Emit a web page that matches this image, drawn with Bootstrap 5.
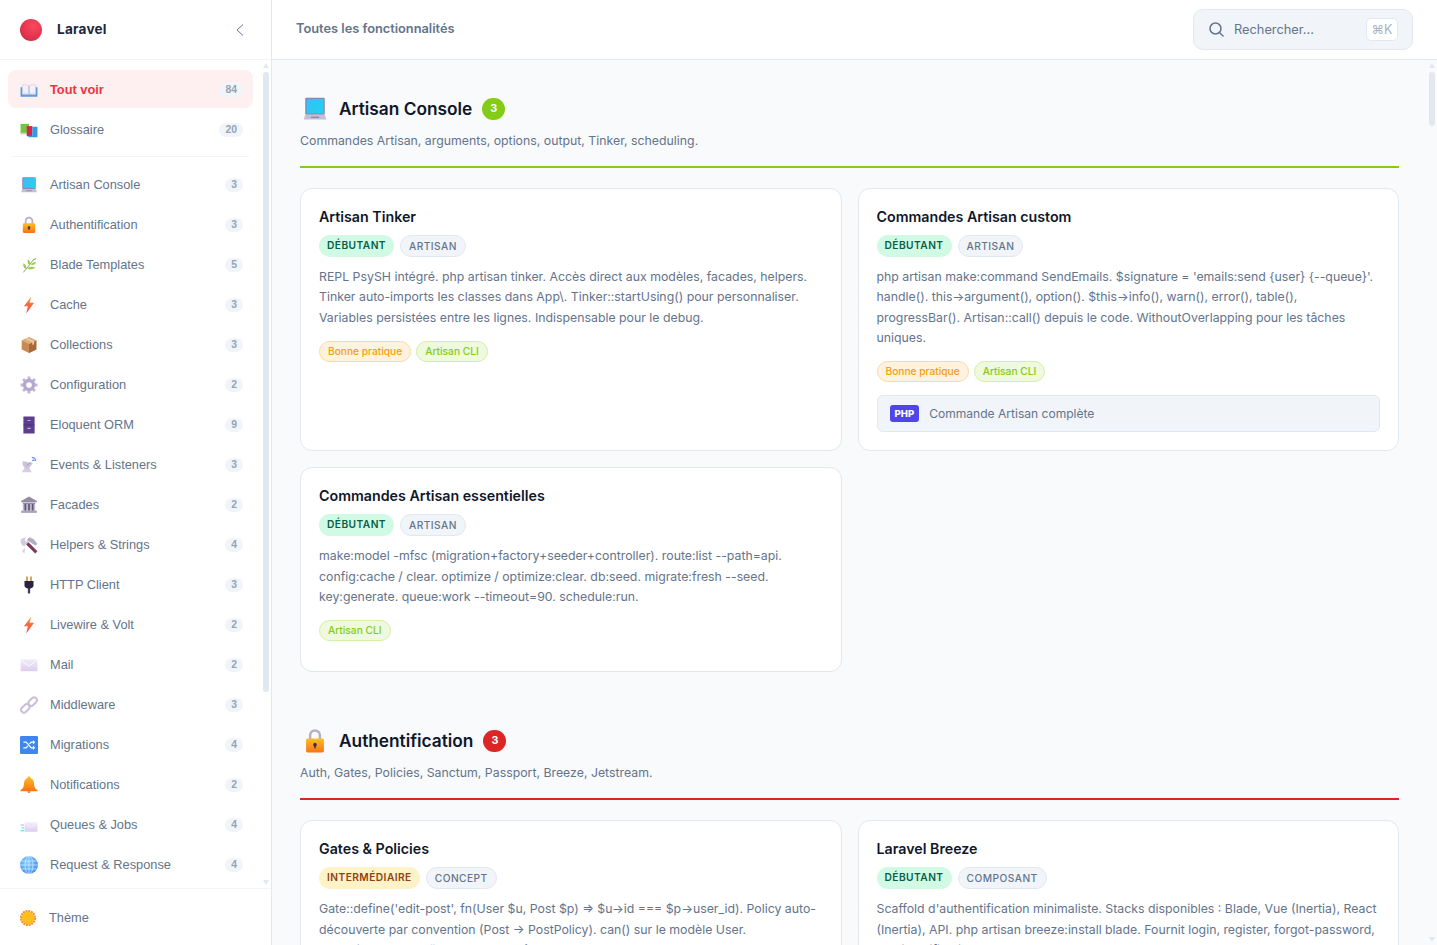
<!DOCTYPE html>
<html lang="fr">
<head>
  <meta charset="UTF-8">
  <title>Laravel - Toutes les fonctionnalités</title>
  <link rel="stylesheet" href="https://cdn.jsdelivr.net/npm/bootstrap@5.3.0/dist/css/bootstrap.min.css">
  <style>
  html, body { height: 100%; }
  body {
    font-family: "Inter", "Liberation Sans", sans-serif;
    background: #f8fafc;
    color: #0f172a;
    overflow: hidden;
  }
  /* scrollbars are part of the picture */
  .bar-col { width: 11px; flex-shrink: 0; padding: 3px 0; }
  .bar-up { width: 0; height: 0; border: 3px solid transparent; border-top: 0; border-bottom: 5px solid #e2e8f0; }
  .bar-down { width: 0; height: 0; border: 3px solid transparent; border-bottom: 0; border-top: 5px solid #e2e8f0; margin-top: auto; }
  .bar-thumb { width: 6px; background: #e2e8f0; border-radius: 3px; margin-top: 4px; }
  .thumb-side { height: 620px; }
  .thumb-main { height: 54px; }

  .side-panel { width: 272px; background: #fff; border-right: 1px solid #e2e8f0; }
  .side-brand { height: 60px; padding: 0 24px 0 20px; border-bottom: 1px solid #f1f5f9; }
  .brand-ball { width: 22px; height: 22px; border-radius: 50%; background: radial-gradient(circle at 62% 32%, #f8495e, #e5344c 55%, #b02a42); }
  .brand-name { font-size: 13.6px; font-weight: 700; color: #1e293b; margin-left: 15px; letter-spacing: .2px; }
  .side-nav { padding: 10px 7px 10px 8px; overflow: hidden; min-height: 0; }
  .side-item { height: 38px; margin-bottom: 2px; padding: 2px 10px 0 12px; border-radius: 8px; font-family: "Liberation Sans", Arial, sans-serif; font-size: 12.8px; color: #64748b; }
  .side-item svg { width: 18px; height: 18px; margin-right: 12px; flex-shrink: 0; }
  .side-item.is-on { background: #fef0f0; color: #ef3340; font-weight: 600; }
  .side-count { font-size: 10.4px; font-weight: 600; line-height: 14px; padding: 0 6px; margin-top: -1px; color: #94a3b8; background: #f1f5f9; border-radius: 10px; }
  .side-rule { height: 1px; background: #f1f5f9; margin: 8px 4px; }
  .side-foot { height: 57px; padding: 1px 21px 0; border-top: 1px solid #f1f5f9; font-family: "Liberation Sans", Arial, sans-serif; font-size: 12.8px; color: #64748b; }
  .side-foot svg { width: 16px; height: 16px; margin-right: 13px; margin-left: -1px; }

  .top-bar { height: 60px; padding: 0 24px; background: #fff; border-bottom: 1px solid #e2e8f0; }
  .top-title { font-size: 12.8px; font-weight: 600; color: #64748b; margin-top: -2px; }
  .search-box { width: 220px; height: 41px; padding: 0 14px; background: #f1f5f9; border: 1px solid #e2e8f0; border-radius: 10px; font-size: 12.8px; color: #64748b; }
  .search-box svg { width: 17px; height: 17px; margin-right: 9px; flex-shrink: 0; }
  .search-key { width: 32px; height: 23px; background: #fff; border: 1px solid #e2e8f0; border-radius: 5px; font-size: 12.5px; color: #a8b3c4; line-height: 21px; text-align: center; }

  .main-scroll { overflow: hidden; padding: 28px 27px 28px 28px; min-width: 0; }
  .feat-section { margin-bottom: 48px; }
  .sec-head { height: 42px; padding-left: 2px; }
  .sec-head svg { width: 26px; height: 26px; margin-right: 11px; }
  .sec-title { font-size: 17.28px; font-weight: 600; color: #0f172a; margin: 0 10px 0 0; }
  .sec-count { min-width: 23px; height: 22px; padding: 0 7px; border-radius: 11px; color: #fff; font-size: 10.8px; font-weight: 700; }
  .sec-desc { font-size: 12.32px; color: #64748b; line-height: 20px; margin: 1px 0 20px; padding-bottom: 15px; border-bottom: 2px solid; }
  .feat-grid { display: grid; grid-template-columns: 1fr 1fr; gap: 16px; }
  .feat-card { background: #fff; border: 1px solid #e2e8f0; border-radius: 12px; padding: 18px; }
  .feat-name { font-size: 14.24px; font-weight: 600; color: #0f172a; line-height: 20px; margin: 0 0 8px; }
  .lvl-row { gap: 6px; }
  .lvl-tag { font-size: 10.2px; font-weight: 600; letter-spacing: .45px; line-height: 14px; padding: 3px 8px 5px; border-radius: 11px; text-transform: uppercase; }
  .lvl-easy { background: #d1fae5; color: #065f46; }
  .lvl-mid { background: #fef3c7; color: #92400e; }
  .lvl-kind { background: #f1f5f9; color: #64748b; border: 1px solid #e2e8f0; padding: 3px 8px; font-weight: 500; }
  .feat-text { font-size: 12.32px; line-height: 20.33px; color: #64748b; margin: 10px 0 0; }
  .note-row { gap: 5px; margin: 13px 0 12px; }
  .note-tag { font-size: 10.2px; line-height: 13px; font-weight: 500; padding: 3px 8px 3px; border-radius: 11px; border: 1px solid; }
  .note-good { background: #fff3e0; color: #f59e0b; border-color: #fed7aa; }
  .note-cli { background: #eef9dd; color: #84cc16; border-color: #d4efa8; }
  .code-row { height: 37px; margin-top: 13px; padding: 0 12px; background: #f1f5f9; border: 1px solid #e2e8f0; border-radius: 6px; font-size: 12.05px; color: #64748b; }
  .php-chip { background: #4f46e5; color: #fff; font-size: 9.6px; font-weight: 800; line-height: 17px; padding: 0 5px; border-radius: 3px; margin-right: 10px; }
  .bg-lime { background: #84cc16; }
  .rule-lime { border-color: #84cc16; }
  .bg-crimson { background: #dc2626; }
  .rule-crimson { border-color: #dc2626; }
  </style>
</head>
<body>
  <svg width="0" height="0" class="position-absolute">
    <defs>
      <linearGradient id="gScreen" x1="0" y1="0" x2="1" y2="1"><stop offset="0" stop-color="#38bdf8"/><stop offset="1" stop-color="#22d3ee"/></linearGradient>
      <linearGradient id="gOrange" x1="0" y1="0" x2="0" y2="1"><stop offset="0" stop-color="#fbbf24"/><stop offset="1" stop-color="#f97316"/></linearGradient>
      <linearGradient id="gBolt" x1="0" y1="0" x2="0" y2="1"><stop offset="0" stop-color="#fb923c"/><stop offset="1" stop-color="#ef4444"/></linearGradient>
      <linearGradient id="gMail" x1="0" y1="0" x2="0" y2="1"><stop offset="0" stop-color="#f1ecf8"/><stop offset="1" stop-color="#dccdf0"/></linearGradient>
      <radialGradient id="gGlobe" cx=".4" cy=".35" r=".8"><stop offset="0" stop-color="#7dd3fc"/><stop offset="1" stop-color="#3b82f6"/></radialGradient>
      <symbol id="ic-book" viewBox="0 0 32 32"><path d="M4 7c4-1 9 0 12 2v15c-3-2-8-3-12-2zM28 7c-4-1-9 0-12 2v15c3-2 8-3 12-2z" fill="#f3f0fa" stroke="#cfc6e2"/><path d="M1 11h3v13h24V11h3v17H1z" fill="#5b9bd9"/><path d="M15.500 8h1v20h-1z" fill="#8fb4e0"/></symbol>
      <symbol id="ic-books" viewBox="0 0 32 32"><path d="M1 5h15v18H1z" fill="#76c442"/><path d="M1 21h15v3H1z" fill="#c9d8c0"/><path d="M12 9h10v18H12z" fill="#d1264f"/><path d="M22 10h9v19H15v-3h7z" fill="#2f9be8"/></symbol>
      <symbol id="ic-laptop" viewBox="0 0 32 32"><rect x="4" y="2" width="24" height="21" rx="1.500" fill="#8a83a8"/><rect x="5.500" y="3.500" width="21" height="18" fill="url(#gScreen)"/><path d="M4 23h24l2 6H2z" fill="#c4bed6"/><path d="M11 25.500h10V27H11z" fill="#8a83a8"/></symbol>
      <symbol id="ic-lock" viewBox="0 0 32 32"><path d="M10 15V9a6 6 0 0 1 12 0v6" fill="none" stroke="#b5aec6" stroke-width="3"/><rect x="5" y="13" width="22" height="17" rx="2" fill="url(#gOrange)"/><circle cx="16" cy="20.500" r="2.200" fill="#3a2f4e"/><path d="M15 21h2v4h-2z" fill="#3a2f4e"/></symbol>
      <symbol id="ic-herb" viewBox="0 0 32 32"><path d="M6 29C12 22 18 15 25 5" fill="none" stroke="#6a9a32" stroke-width="1.500"/><path d="M11 23C7 22 5 18 6 13c4 2 6 6 5 10zM17 16c-3-2-4-5-3-10 4 2 5 6 3 10zM13 22c3-3 8-4 14-2-3 4-9 5-14 2zM19 15c2-3 6-4 10-4-2 4-6 6-10 4zM24 7c1-2 3-3 5-4 0 3-2 5-5 4z" fill="#98cc4c"/></symbol>
      <symbol id="ic-bolt" viewBox="0 0 32 32"><path d="M20 1 7 18h7l-3 13 14-19h-8z" fill="url(#gBolt)"/></symbol>
      <symbol id="ic-box" viewBox="0 0 32 32"><path d="M16 2 29 8v16l-13 6L3 24V8z" fill="#c98a54"/><path d="M16 14v16l13-6V8z" fill="#a8693a"/><path d="M16 2 29 8l-13 6L3 8z" fill="#e0ad7a"/><path d="m9 5 13 6v5l3-1.500v-5L12 3.500z" fill="#f0d0a8"/></symbol>
      <symbol id="ic-gear" viewBox="0 0 32 32"><path d="M16 1v6M16 25v6M1 16h6M25 16h6M5.400 5.400l4 4M22.600 22.600l4 4M5.400 26.600l4-4M22.600 9.400l4-4" stroke="#c0b6d8" stroke-width="5"/><circle cx="16" cy="16" r="8" fill="#fff" stroke="#b3a8ce" stroke-width="6"/></symbol>
      <symbol id="ic-cabinet" viewBox="0 0 32 32"><rect x="6" y="1" width="20" height="30" rx="1" fill="#5b3f8e"/><path d="M6 15.500h20v1H6z" fill="#3d2a66"/><path d="M13 7h6v2h-6zM13 21h6v2h-6z" fill="#b5a6d8"/></symbol>
      <symbol id="ic-dish" viewBox="0 0 32 32"><path d="M3 29h18l-5-9H9z" fill="#d6d0e2"/><path d="M5 9c-2 6 2 14 9 15l9-11z" fill="#cbc4da"/><path d="M12 17l8-6" stroke="#9a93ae" stroke-width="1.500"/><path d="M22 9c1-2 2-2 4-1M21 3c4-1 7 2 7 6" fill="none" stroke="#5b8ce8" stroke-width="2"/></symbol>
      <symbol id="ic-bank" viewBox="0 0 32 32"><path d="M16 1 30 9v2H2V9z" fill="#948ca6"/><path d="M5 12h22v2H5z" fill="#7b7390"/><path d="M5 14h22v12H5z" fill="#bdb6cc"/><path d="M8 14h3v12H8zM14.500 14h3v12h-3zM21 14h3v12h-3z" fill="#5f5773"/><path d="M2 26h28v4H2z" fill="#a9a2ba"/></symbol>
      <symbol id="ic-tools" viewBox="0 0 32 32"><path d="M1 8c2-5 7-6 10-5l-3 4 3 3 4-3c1 3-1 8-6 8L8 31l-4-4 6-9C5 19 1 14 1 8z" fill="#d2ccde"/><path d="M12 7l5-5 8 4 6 8-4 3-6-4z" fill="#b3acc4"/><path d="M15 11 31 27l-4 4L11 15z" fill="#7a3c5c"/></symbol>
      <symbol id="ic-plug" viewBox="0 0 32 32"><path d="M11 1h3v9h-3zM18 1h3v9h-3z" fill="#c89a3e"/><path d="M8 9h16v8c0 3-3 5-5 5h-6c-2 0-5-2-5-5z" fill="#2b2140"/><path d="M14 21h4v10h-4z" fill="#3f3454"/></symbol>
      <symbol id="ic-mail" viewBox="0 0 32 32"><rect x="1" y="6" width="30" height="21" fill="url(#gMail)"/><path d="m1 7 15 11L31 7" fill="none" stroke="#fff" stroke-width="1.500"/></symbol>
      <symbol id="ic-link" viewBox="0 0 32 32"><g fill="none" stroke="#c8bfd8" stroke-width="3.500"><rect x="1" y="17" width="17" height="10" rx="5" transform="rotate(-45 9.500 22)"/><rect x="14" y="5" width="17" height="10" rx="5" transform="rotate(-45 22.500 10)"/></g></symbol>
      <symbol id="ic-shuffle" viewBox="0 0 32 32"><rect x="0" y="0" width="32" height="32" rx="2" fill="#3f86ee"/><path d="M6 11h5l9 10h5M6 21h5l3-3.500M17 14l3-3h5" fill="none" stroke="#fff" stroke-width="2.200"/><path d="m23 7 4 4-4 4zM23 17l4 4-4 4z" fill="#fff"/></symbol>
      <symbol id="ic-bell" viewBox="0 0 32 32"><path d="M16 1c2 0 3 1 3 3 4 1 6 5 6 10 0 6 3 9 6 11v2H1v-2c3-2 6-5 6-11 0-5 2-9 6-10 0-2 1-3 3-3z" fill="url(#gOrange)"/><path d="M13 27h6a3 3 0 0 1-6 0z" fill="#e0762a"/></symbol>
      <symbol id="ic-queue" viewBox="0 0 32 32"><rect x="8" y="11" width="23" height="17" fill="url(#gMail)"/><path d="m8 12 11.500 8L31 12" fill="none" stroke="#fff"/><path d="M1 15h6v2H1zM3 20h4v2H3zM1 25h6v2H1z" fill="#67d8ee"/></symbol>
      <symbol id="ic-globe" viewBox="0 0 32 32"><circle cx="16" cy="16" r="16" fill="url(#gGlobe)"/><g fill="none" stroke="#dbeafe" stroke-width="1.300"><ellipse cx="16" cy="16" rx="7" ry="16"/><path d="M16 0v32M0 16h32M3 9h26M3 23h26"/></g></symbol>
      <symbol id="ic-sun" viewBox="0 0 32 32"><circle cx="16" cy="16" r="14" fill="none" stroke="#f58a2c" stroke-width="4" stroke-dasharray="4 1.500"/><circle cx="16" cy="16" r="13" fill="#fbbf24"/></symbol>
    </defs>
  </svg>

  <div class="d-flex vh-100">
    <aside class="side-panel d-flex flex-column flex-shrink-0">
      <div class="side-brand d-flex align-items-center flex-shrink-0">
        <span class="brand-ball"></span>
        <span class="brand-name flex-grow-1">Laravel</span>
        <svg width="14" height="14" viewBox="0 0 14 14" fill="none" stroke="#64748b" stroke-width="1"><path d="M10 1.500 4 7l6 5.500"/></svg>
      </div>
      <div class="d-flex flex-grow-1 overflow-hidden">
        <nav class="side-nav flex-grow-1" id="sideNav"></nav>
        <div class="bar-col d-flex flex-column align-items-center"><span class="bar-up"></span><span class="bar-thumb thumb-side"></span><span class="bar-down"></span></div>
      </div>
      <div class="side-foot d-flex align-items-center flex-shrink-0">
        <svg><use href="#ic-sun"/></svg>
        <span>Thème</span>
      </div>
    </aside>

    <div class="d-flex flex-column flex-grow-1 overflow-hidden">
      <header class="top-bar d-flex align-items-center justify-content-between flex-shrink-0">
        <span class="top-title">Toutes les fonctionnalités</span>
        <div class="search-box d-flex align-items-center">
          <svg viewBox="0 0 17 17" fill="none" stroke="#64748b" stroke-width="1.500"><circle cx="7.500" cy="7.500" r="5.500"/><path d="m11.500 11.500 4 4"/></svg>
          <span class="flex-grow-1">Rechercher...</span>
          <span class="search-key">⌘K</span>
        </div>
      </header>

      <div class="d-flex flex-grow-1 overflow-hidden">
        <main class="main-scroll flex-grow-1">
          <section class="feat-section">
            <div class="sec-head d-flex align-items-center">
              <svg><use href="#ic-laptop"/></svg>
              <h2 class="sec-title">Artisan Console</h2>
              <span class="sec-count d-inline-flex align-items-center justify-content-center bg-lime">3</span>
            </div>
            <p class="sec-desc rule-lime">Commandes Artisan, arguments, options, output, Tinker, scheduling.</p>
            <div class="feat-grid">
              <article class="feat-card">
                <h3 class="feat-name">Artisan Tinker</h3>
                <div class="d-flex lvl-row"><span class="lvl-tag lvl-easy">Débutant</span><span class="lvl-tag lvl-kind">Artisan</span></div>
                <p class="feat-text">REPL PsySH intégré. php artisan tinker. Accès direct aux modèles, facades, helpers. Tinker auto-imports les classes dans App\. Tinker::startUsing() pour personnaliser. Variables persistées entre les lignes. Indispensable pour le debug.</p>
                <div class="d-flex note-row"><span class="note-tag note-good">Bonne pratique</span><span class="note-tag note-cli">Artisan CLI</span></div>
              </article>
              <article class="feat-card">
                <h3 class="feat-name">Commandes Artisan custom</h3>
                <div class="d-flex lvl-row"><span class="lvl-tag lvl-easy">Débutant</span><span class="lvl-tag lvl-kind">Artisan</span></div>
                <p class="feat-text">php artisan make:command SendEmails. $signature = 'emails:send {user} {--queue}'. handle(). this-&gt;argument(), option(). $this-&gt;info(), warn(), error(), table(), progressBar(). Artisan::call() depuis le code. WithoutOverlapping pour les tâches uniques.</p>
                <div class="d-flex note-row"><span class="note-tag note-good">Bonne pratique</span><span class="note-tag note-cli">Artisan CLI</span></div>
                <div class="code-row d-flex align-items-center"><span class="php-chip">PHP</span>Commande Artisan complète</div>
              </article>
              <article class="feat-card">
                <h3 class="feat-name">Commandes Artisan essentielles</h3>
                <div class="d-flex lvl-row"><span class="lvl-tag lvl-easy">Débutant</span><span class="lvl-tag lvl-kind">Artisan</span></div>
                <p class="feat-text">make:model -mfsc (migration+factory+seeder+controller). route:list --path=api. config:cache / clear. optimize / optimize:clear. db:seed. migrate:fresh --seed. key:generate. queue:work --timeout=90. schedule:run.</p>
                <div class="d-flex note-row"><span class="note-tag note-cli">Artisan CLI</span></div>
              </article>
            </div>
          </section>

          <section class="feat-section">
            <div class="sec-head d-flex align-items-center">
              <svg><use href="#ic-lock"/></svg>
              <h2 class="sec-title">Authentification</h2>
              <span class="sec-count d-inline-flex align-items-center justify-content-center bg-crimson">3</span>
            </div>
            <p class="sec-desc rule-crimson">Auth, Gates, Policies, Sanctum, Passport, Breeze, Jetstream.</p>
            <div class="feat-grid">
              <article class="feat-card">
                <h3 class="feat-name">Gates &amp; Policies</h3>
                <div class="d-flex lvl-row"><span class="lvl-tag lvl-mid">Intermédiaire</span><span class="lvl-tag lvl-kind">Concept</span></div>
                <p class="feat-text">Gate::define('edit-post', fn(User $u, Post $p) =&gt; $u-&gt;id === $p-&gt;user_id). Policy auto-découverte par convention (Post → PostPolicy). can() sur le modèle User. authorizeResource() dans les contrôleurs, @can dans Blade.</p>
              </article>
              <article class="feat-card">
                <h3 class="feat-name">Laravel Breeze</h3>
                <div class="d-flex lvl-row"><span class="lvl-tag lvl-easy">Débutant</span><span class="lvl-tag lvl-kind">Composant</span></div>
                <p class="feat-text">Scaffold d'authentification minimaliste. Stacks disponibles : Blade, Vue (Inertia), React (Inertia), API. php artisan breeze:install blade. Fournit login, register, forgot-password, email verification.</p>
              </article>
            </div>
          </section>
        </main>
        <div class="bar-col d-flex flex-column align-items-center"><span class="bar-up"></span><span class="bar-thumb thumb-main"></span><span class="bar-down"></span></div>
      </div>
    </div>
  </div>

  <script src="https://cdn.jsdelivr.net/npm/bootstrap@5.3.0/dist/js/bootstrap.bundle.min.js"></script>
  <script>
  // Sidebar entries: icon, label, count
  const topItems = [['book', 'Tout voir', 84], ['books', 'Glossaire', 20]];
  const catItems = [
    ['laptop', 'Artisan Console', 3], ['lock', 'Authentification', 3], ['herb', 'Blade Templates', 5],
    ['bolt', 'Cache', 3], ['box', 'Collections', 3], ['gear', 'Configuration', 2],
    ['cabinet', 'Eloquent ORM', 9], ['dish', 'Events &amp; Listeners', 3], ['bank', 'Facades', 2],
    ['tools', 'Helpers &amp; Strings', 4], ['plug', 'HTTP Client', 3], ['bolt', 'Livewire &amp; Volt', 2],
    ['mail', 'Mail', 2], ['link', 'Middleware', 3], ['shuffle', 'Migrations', 4],
    ['bell', 'Notifications', 2], ['queue', 'Queues &amp; Jobs', 4], ['globe', 'Request &amp; Response', 4]
  ];

  function itemHtml(item, active) {
    return `<div class="side-item d-flex align-items-center ${active ? 'is-on' : ''}">
      <svg><use href="#ic-${item[0]}"/></svg>
      <span class="flex-grow-1">${item[1]}</span>
      <span class="side-count">${item[2]}</span>
    </div>`;
  }

  document.getElementById('sideNav').innerHTML =
    topItems.map((it, i) => itemHtml(it, i === 0)).join('') +
    '<div class="side-rule"></div>' +
    catItems.map(it => itemHtml(it, false)).join('');
  </script>
</body>
</html>
